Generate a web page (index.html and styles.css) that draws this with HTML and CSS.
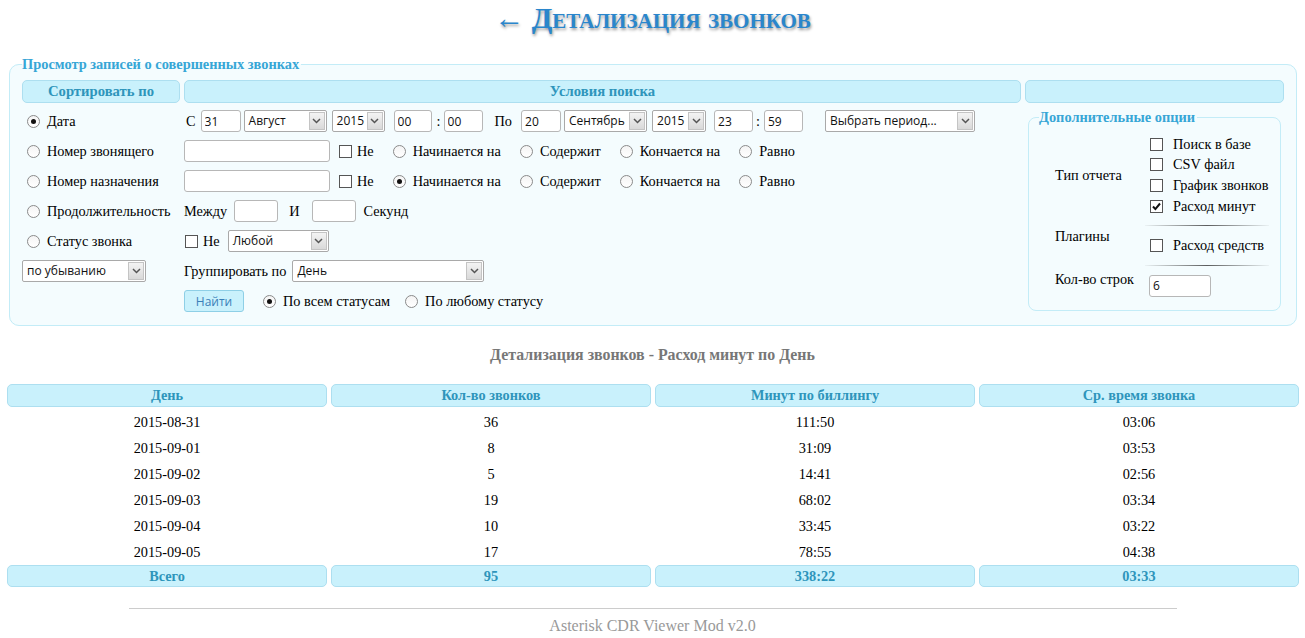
FILE: index.html
```html
<!DOCTYPE html>
<html lang="ru">
<head>
<meta charset="utf-8">
<title>Детализация звонков</title>
<link rel="stylesheet" href="styles.css">
</head>
<body>
<h1 class="title"><span class="back">←</span> Детализация звонков</h1>

<fieldset class="main">
  <legend>Просмотр записей о совершенных звонках</legend>
  <div class="form-grid">
    <div class="th">Сортировать по</div>
    <div class="th">Условия поиска</div>
    <div class="th"></div>

    <fieldset class="extra">
      <legend>Дополнительные опции</legend>
      <div class="opts">
        <div class="olabel">Тип отчета</div>
        <div class="ocol">
          <div class="oline"><span class="cb"></span><span>Поиск в базе</span></div>
          <div class="oline"><span class="cb"></span><span>CSV файл</span></div>
          <div class="oline"><span class="cb"></span><span>График звонков</span></div>
          <div class="oline"><span class="cb on"><svg width="11" height="11" viewBox="0 0 11 11"><path d="M2 5.5l2.4 2.6L9 2.5" fill="none" stroke="#111" stroke-width="2"/></svg></span><span>Расход минут</span></div>
        </div>
        <div class="olabel">Плагины</div>
        <div class="ocol">
          <div class="sep"></div>
          <div class="oline"><span class="cb"></span><span>Расход средств</span></div>
        </div>
        <div class="olabel low">Кол-во строк</div>
        <div class="ocol">
          <div class="sep"></div>
          <input class="inp w62" type="text" value="6">
        </div>
      </div>
    </fieldset>

    <div class="c1"><span class="rd on"></span><span>Дата</span></div>
    <div class="c2">
      <span class="ml2">С</span>
      <input class="inp w40 ml5" type="text" value="31">
      <span class="sel w83 ml3"><span class="sv">Август</span><span class="sa"><svg width="9" height="6" viewBox="0 0 9 6"><path d="M1 1l3.5 3.5L8 1" fill="none" stroke="#555" stroke-width="1.5"/></svg></span></span>
      <span class="sel w53 ml5"><span class="sv">2015</span><span class="sa"><svg width="9" height="6" viewBox="0 0 9 6"><path d="M1 1l3.5 3.5L8 1" fill="none" stroke="#555" stroke-width="1.5"/></svg></span></span>
      <input class="inp w38 ml9" type="text" value="00">
      <span class="ml5">:</span>
      <input class="inp w39 ml3" type="text" value="00">
      <span class="ml12">По</span>
      <input class="inp w40 ml9" type="text" value="20">
      <span class="sel w83 ml3"><span class="sv">Сентябрь</span><span class="sa"><svg width="9" height="6" viewBox="0 0 9 6"><path d="M1 1l3.5 3.5L8 1" fill="none" stroke="#555" stroke-width="1.5"/></svg></span></span>
      <span class="sel w54 ml5"><span class="sv">2015</span><span class="sa"><svg width="9" height="6" viewBox="0 0 9 6"><path d="M1 1l3.5 3.5L8 1" fill="none" stroke="#555" stroke-width="1.5"/></svg></span></span>
      <input class="inp w39 ml8" type="text" value="23">
      <span class="ml3">:</span>
      <input class="inp w39 ml4" type="text" value="59">
      <span class="sel w150 ml22"><span class="sv">Выбрать период...</span><span class="sa"><svg width="9" height="6" viewBox="0 0 9 6"><path d="M1 1l3.5 3.5L8 1" fill="none" stroke="#555" stroke-width="1.5"/></svg></span></span>
    </div>

    <div class="c1"><span class="rd"></span><span>Номер звонящего</span></div>
    <div class="c2">
      <input class="inp w146" type="text" value="">
      <span class="cb ml9"></span><span class="ml5">Не</span>
      <span class="rd g"></span><span>Начинается на</span>
      <span class="rd g"></span><span>Содержит</span>
      <span class="rd g"></span><span>Кончается на</span>
      <span class="rd g"></span><span>Равно</span>
    </div>

    <div class="c1"><span class="rd"></span><span>Номер назначения</span></div>
    <div class="c2">
      <input class="inp w146" type="text" value="">
      <span class="cb ml9"></span><span class="ml5">Не</span>
      <span class="rd g on"></span><span>Начинается на</span>
      <span class="rd g"></span><span>Содержит</span>
      <span class="rd g"></span><span>Кончается на</span>
      <span class="rd g"></span><span>Равно</span>
    </div>

    <div class="c1"><span class="rd"></span><span>Продолжительность</span></div>
    <div class="c2">
      <span>Между</span>
      <input class="inp w44 ml7" type="text" value="">
      <span class="ml11">И</span>
      <input class="inp w44 ml12" type="text" value="">
      <span class="ml8">Секунд</span>
    </div>

    <div class="c1"><span class="rd"></span><span>Статус звонка</span></div>
    <div class="c2">
      <span class="cb ml1"></span><span class="ml5">Не</span>
      <span class="sel w101 ml8"><span class="sv">Любой</span><span class="sa"><svg width="9" height="6" viewBox="0 0 9 6"><path d="M1 1l3.5 3.5L8 1" fill="none" stroke="#555" stroke-width="1.5"/></svg></span></span>
    </div>

    <div class="c1 flush">
      <span class="sel w124"><span class="sv">по убыванию</span><span class="sa"><svg width="9" height="6" viewBox="0 0 9 6"><path d="M1 1l3.5 3.5L8 1" fill="none" stroke="#555" stroke-width="1.5"/></svg></span></span>
    </div>
    <div class="c2">
      <span>Группировать по</span>
      <span class="sel w192 ml6"><span class="sv">День</span><span class="sa"><svg width="9" height="6" viewBox="0 0 9 6"><path d="M1 1l3.5 3.5L8 1" fill="none" stroke="#555" stroke-width="1.5"/></svg></span></span>
    </div>

    <div class="c1"></div>
    <div class="c2">
      <button class="btn" type="button">Найти</button>
      <span class="rd g on"></span><span>По всем статусам</span>
      <span class="rd g2"></span><span>По любому статусу</span>
    </div>
  </div>
</fieldset>

<div class="subtitle">Детализация звонков - Расход минут по День</div>

<div class="results">
  <div class="hc">День</div>
  <div class="hc">Кол-во звонков</div>
  <div class="hc">Минут по биллингу</div>
  <div class="hc">Ср. время звонка</div>

  <div class="dc">2015-08-31</div><div class="dc">36</div><div class="dc">111:50</div><div class="dc">03:06</div>
  <div class="dc">2015-09-01</div><div class="dc">8</div><div class="dc">31:09</div><div class="dc">03:53</div>
  <div class="dc">2015-09-02</div><div class="dc">5</div><div class="dc">14:41</div><div class="dc">02:56</div>
  <div class="dc">2015-09-03</div><div class="dc">19</div><div class="dc">68:02</div><div class="dc">03:34</div>
  <div class="dc">2015-09-04</div><div class="dc">10</div><div class="dc">33:45</div><div class="dc">03:22</div>
  <div class="dc">2015-09-05</div><div class="dc">17</div><div class="dc">78:55</div><div class="dc">04:38</div>

  <div class="fc">Всего</div>
  <div class="fc">95</div>
  <div class="fc">338:22</div>
  <div class="fc">03:33</div>
</div>

<hr class="rule">
<div class="footer">Asterisk CDR Viewer Mod v2.0</div>
</body>
</html>
```

FILE: styles.css
```css
* { box-sizing: border-box; }

html, body {
  margin: 0;
  padding: 0;
  background: #ffffff;
  font-family: "Liberation Serif", "Times New Roman", serif;
  font-size: 14.3px;
  color: #000;
}

.title {
  margin: 0;
  text-align: center;
  font-size: 30px;
  line-height: 36px;
  font-weight: bold;
  font-variant: small-caps;
  color: #2a86cc;
  text-shadow: 1px 2px 3px rgba(0, 0, 0, 0.4);
}

.back { font-weight: normal; }

fieldset.main {
  margin: 21px 8px 0 9px;
  padding: 8px 12px 9px 12px;
  border: 1px solid #c3ecf7;
  border-radius: 10px;
  background: #f4fcfe;
  min-width: 0;
}

fieldset.main > legend {
  margin-left: 0;
  padding: 0 2px 0 0;
  font-size: 14.4px;
  line-height: 15px;
  font-weight: bold;
  color: #37a6d6;
}

.form-grid {
  display: grid;
  grid-template-columns: 158px 837px 259px;
  grid-template-rows: 26px repeat(7, 30px);
  column-gap: 4px;
}

.th {
  height: 23px;
  background: #c9f1fc;
  border: 1px solid #addff0;
  border-radius: 5px;
  text-align: center;
  font-weight: bold;
  font-size: 14.7px;
  line-height: 21px;
  color: #2e95bb;
}

.c1, .c2 {
  display: flex;
  align-items: center;
  white-space: nowrap;
}

.c1 { padding-left: 5px; }
.c1.flush { padding-left: 0; }
.c1 .rd { margin-right: 7px; }

.rd {
  display: inline-block;
  width: 13px;
  height: 13px;
  border: 1px solid #8a8a8a;
  border-radius: 50%;
  background: linear-gradient(#f4f4f4, #ffffff);
  position: relative;
  flex: none;
}

.rd.on::after {
  content: "";
  position: absolute;
  left: 3px;
  top: 3px;
  width: 5px;
  height: 5px;
  border-radius: 50%;
  background: #111;
}

.rd.g { margin-left: 19px; margin-right: 7px; }
.rd.g2 { margin-left: 15px; margin-right: 7px; }

.cb {
  display: inline-flex;
  align-items: center;
  justify-content: center;
  width: 13px;
  height: 13px;
  border: 1px solid #555;
  background: #fff;
  flex: none;
}

.inp {
  height: 22px;
  border: 1px solid #b7b7b7;
  border-radius: 3px;
  background: #fff;
  padding: 0 3px;
  font-family: "Open Sans", "DejaVu Sans", sans-serif;
  font-size: 12px;
  color: #111;
  line-height: 20px;
  flex: none;
  outline: none;
}

.sel {
  display: inline-flex;
  align-items: stretch;
  height: 22px;
  border: 1px solid #a9a9a9;
  border-radius: 2px;
  background: #fff;
  font-family: "Open Sans", "DejaVu Sans", sans-serif;
  font-size: 12px;
  color: #111;
  flex: none;
}

.sv {
  flex: 1;
  padding-left: 4px;
  line-height: 20px;
  overflow: hidden;
  white-space: nowrap;
}

.sa {
  width: 16px;
  margin: 1px;
  border: 1px solid #c4c4c4;
  background: linear-gradient(#f3f3f3, #d9d9d9);
  display: flex;
  align-items: center;
  justify-content: center;
}

.btn {
  width: 60px;
  height: 22px;
  border: 1px solid #8ecfe6;
  border-radius: 3px;
  background: #c9f1fc;
  color: #3a7fb8;
  font-family: "Open Sans", "DejaVu Sans", sans-serif;
  font-size: 12px;
  padding: 0;
  flex: none;
}

.w38 { width: 38px; }
.w39 { width: 39px; }
.w40 { width: 40px; }
.w44 { width: 44px; }
.w53 { width: 53px; }
.w54 { width: 54px; }
.w62 { width: 62px; }
.w83 { width: 83px; }
.w101 { width: 101px; }
.w124 { width: 124px; }
.w146 { width: 146px; }
.w150 { width: 150px; }
.w192 { width: 192px; }

.ml1 { margin-left: 1px; }
.ml2 { margin-left: 2px; }
.ml3 { margin-left: 3px; }
.ml4 { margin-left: 4px; }
.ml5 { margin-left: 5px; }
.ml6 { margin-left: 6px; }
.ml7 { margin-left: 7px; }
.ml8 { margin-left: 8px; }
.ml9 { margin-left: 9px; }
.ml10 { margin-left: 10px; }
.ml11 { margin-left: 11px; }
.ml12 { margin-left: 12px; }
.ml22 { margin-left: 22px; }

fieldset.extra {
  grid-column: 3;
  grid-row: 2 / 9;
  margin: 4px 3px 5px 3px;
  padding: 0 0 14px 0;
  border: 1px solid #c3ecf7;
  border-radius: 8px;
  min-width: 0;
}

fieldset.extra > legend {
  margin-left: 10px;
  padding: 0 2px 0 0;
  font-size: 14.4px;
  line-height: 15px;
  font-weight: bold;
  color: #37a6d6;
}

.opts {
  display: grid;
  grid-template-columns: 94px 1fr;
  padding: 9px 13px 0 26px;
}

.olabel {
  align-self: center;
  white-space: nowrap;
}

.olabel.low { padding-top: 6px; }

.ocol {
  display: flex;
  flex-direction: column;
  align-items: flex-start;
}

.oline {
  height: 20.6px;
  display: flex;
  align-items: center;
  margin-left: 1px;
  white-space: nowrap;
}

.oline .cb { margin-right: 10px; }

.sep {
  align-self: stretch;
  height: 1px;
  margin: 9px 0 9px -4px;
  background: linear-gradient(to right, rgba(60, 60, 60, 0.05), rgba(40, 40, 40, 0.75), rgba(60, 60, 60, 0.05));
}

.subtitle {
  margin-top: 20px;
  text-align: center;
  font-size: 15.9px;
  line-height: 18px;
  font-weight: bold;
  color: #777;
}

.results {
  margin: 20px 6px 0 7px;
  display: grid;
  grid-template-columns: repeat(4, 1fr);
  column-gap: 4px;
  row-gap: 2px;
}

.hc, .fc {
  background: #c9f1fc;
  border: 1px solid #addff0;
  border-radius: 5px;
  text-align: center;
  font-weight: bold;
  color: #2e95bb;
}

.hc { height: 23px; line-height: 21px; }
.fc { height: 22px; line-height: 20px; }

.dc {
  height: 24px;
  line-height: 26px;
  text-align: center;
}

.rule {
  width: 1048px;
  margin: 21px auto 0;
  border: 0;
  border-top: 1px solid #cccccc;
  height: 0;
}

.footer {
  margin-top: 8px;
  text-align: center;
  font-size: 16px;
  line-height: 18px;
  color: #999;
}
```
